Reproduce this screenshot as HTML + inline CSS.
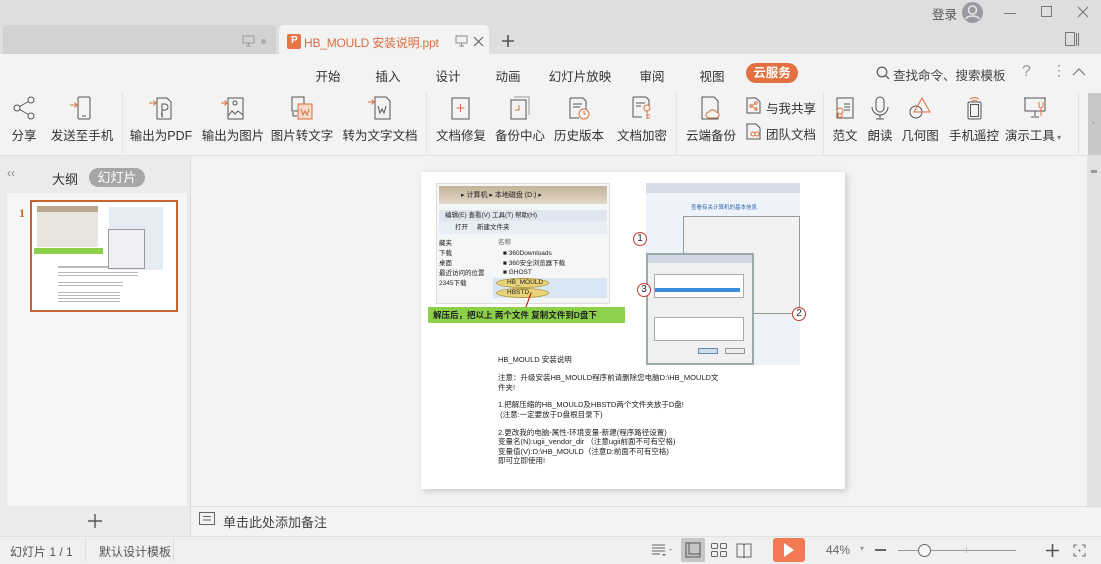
<!DOCTYPE html>
<html><head><meta charset="utf-8"><style>
*{margin:0;padding:0;box-sizing:border-box}
body{width:1101px;height:564px;overflow:hidden;position:relative;background:#f3f3f3;font-family:"Liberation Sans","Noto Sans CJK SC",sans-serif;color:#333}
.a{position:absolute}
.t{position:absolute;white-space:nowrap;font-size:12.5px;color:#333;transform:translateX(-50%)}
.m{position:absolute;font-size:12.5px;color:#333;white-space:nowrap;transform:translateX(-50%);top:66px}
.ic{position:absolute;top:96px;transform:translateX(-50%)}
.sep{position:absolute;top:92px;width:1px;height:62px;background:#e2e2e2}
svg{display:block}
.s{font-size:7.5px;color:#222;position:absolute;white-space:nowrap;line-height:10px}
</style></head><body>
<!-- title bar -->
<div class="a" style="left:0;top:0;width:1101px;height:54px;background:#dedede"></div>
<div class="a" style="left:3px;top:25px;width:273px;height:29px;background:#d2d2d2;border-radius:4px 4px 0 0"></div>
<svg class="a" style="left:242px;top:35px" width="13" height="12"><rect x="1" y="1" width="11" height="7" fill="none" stroke="#999"/><path d="M6.5 8v3M4 11h5" stroke="#999"/></svg>
<div class="a" style="left:261px;top:39px;width:5px;height:5px;border-radius:50%;background:#aaa"></div>
<div class="a" style="left:279px;top:25px;width:210px;height:30px;background:#f3f3f3;border-radius:5px 5px 0 0"></div>
<div class="a" style="left:287px;top:34px;width:14px;height:15px;background:#e8744a;border-radius:2px"></div>
<div class="a" style="left:291px;top:35px;color:#fff;font-size:10px;font-weight:bold">P</div>
<div class="a" style="left:304px;top:34px;font-size:12px;letter-spacing:-0.2px;color:#d96b3f;white-space:nowrap">HB_MOULD 安装说明.ppt</div>
<svg class="a" style="left:455px;top:35px" width="13" height="12"><rect x="1" y="1" width="11" height="7" fill="none" stroke="#888"/><path d="M6.5 8v3M4 11h5" stroke="#888"/></svg>
<svg class="a" style="left:473px;top:36px" width="11" height="11"><path d="M1 1L10 10M10 1L1 10" stroke="#666" stroke-width="1.2"/></svg>
<svg class="a" style="left:501px;top:34px" width="14" height="14"><path d="M7 1v12M1 7h12" stroke="#555" stroke-width="1.6"/></svg>
<div class="a" style="left:932px;top:4px;font-size:12.5px;color:#555">登录</div>
<svg class="a" style="left:962px;top:2px" width="21" height="21"><circle cx="10.5" cy="10.5" r="10.5" fill="#9a9aa3"/><circle cx="10.5" cy="8" r="4" fill="none" stroke="#e8e8e8" stroke-width="1.6"/><path d="M3.5 17c2-4 12-4 14 0" fill="none" stroke="#e8e8e8" stroke-width="1.6"/></svg>
<div class="a" style="left:1004px;top:13px;width:12px;height:1px;background:#777"></div>
<div class="a" style="left:1041px;top:6px;width:11px;height:11px;border:1px solid #777"></div>
<svg class="a" style="left:1077px;top:6px" width="12" height="12"><path d="M1 1L11 11M11 1L1 11" stroke="#777" stroke-width="1.1"/></svg>
<svg class="a" style="left:1065px;top:32px" width="15" height="14"><rect x=".5" y=".5" width="9" height="13" fill="none" stroke="#777"/><path d="M11.5 1v13M13.5 1v13" stroke="#777"/></svg>
<!-- menu -->
<div class="m" style="left:328px">开始</div><div class="m" style="left:388px">插入</div><div class="m" style="left:448px">设计</div><div class="m" style="left:508px">动画</div><div class="m" style="left:580px">幻灯片放映</div><div class="m" style="left:652px">审阅</div><div class="m" style="left:712px">视图</div>
<div class="a" style="left:746px;top:63px;width:52px;height:20px;border-radius:10px;background:#e3713f;color:#fff;font-size:12.5px;text-align:center;line-height:20px;font-weight:bold">云服务</div>
<svg class="a" style="left:876px;top:66px" width="14" height="14"><circle cx="6" cy="6" r="4.8" fill="none" stroke="#666" stroke-width="1.3"/><path d="M9.5 9.5L13 13" stroke="#666" stroke-width="1.4"/></svg>
<div class="a" style="left:893px;top:65px;font-size:12.5px;color:#444">查找命令、搜索模板</div>
<div class="a" style="left:1022px;top:63px;font-size:16px;color:#999">?</div>
<div class="a" style="left:1052px;top:62px;font-size:14px;color:#888">⋮</div>
<svg class="a" style="left:1072px;top:67px" width="14" height="9"><path d="M1 8L7 2L13 8" fill="none" stroke="#777" stroke-width="1.2"/></svg>
<!-- separators -->
<div class="sep" style="left:122px"></div><div class="sep" style="left:426px"></div><div class="sep" style="left:676px"></div><div class="sep" style="left:823px"></div><div class="sep" style="left:1078px"></div>
<div class="a" style="left:1088px;top:93px;width:13px;height:62px;background:#c8c8c8"></div>
<div class="a" style="left:1092px;top:118px;font-size:8px;color:#888">›</div>
<!-- icons -->
<svg class="ic" style="left:24px" width="24" height="24"><circle cx="19" cy="4" r="3" fill="none" stroke="#555"/><circle cx="5" cy="12" r="3" fill="none" stroke="#555"/><circle cx="19" cy="20" r="3" fill="none" stroke="#555"/><path d="M7.6 10.5L16.4 5.5M7.6 13.5L16.4 18.5" stroke="#555"/></svg>
<svg class="ic" style="left:82px" width="24" height="24"><rect x="8" y="1" width="12" height="22" rx="1.5" fill="none" stroke="#555"/><path d="M12 20h4" stroke="#555"/><path d="M0 9h7M4.5 6.5L7 9 4.5 11.5" fill="none" stroke="#d9703f"/></svg>
<svg class="ic" style="left:161px" width="24" height="24"><path d="M8 2h10l4 4v17H8z" fill="none" stroke="#555"/><path d="M13 21V8h3a3 3 0 010 6h-3M13 17c-2 2 2 3 0 4" fill="none" stroke="#555"/><path d="M0 7h7M4.5 4.5L7 7 4.5 9.5" fill="none" stroke="#d9703f"/></svg>
<svg class="ic" style="left:233px" width="24" height="24"><rect x="7" y="2" width="15" height="21" fill="none" stroke="#555"/><circle cx="14" cy="7" r="2" fill="none" stroke="#555"/><path d="M7 20l4-5 3 3 3-3 5 4" fill="none" stroke="#555"/><path d="M0 7h6M3.5 4.5L6 7 3.5 9.5" fill="none" stroke="#d9703f"/></svg>
<svg class="ic" style="left:302px" width="24" height="24"><rect x="2" y="1" width="12" height="14" fill="none" stroke="#555"/><path d="M8 8h14v15H8z" fill="#f4d8c8" stroke="#d9703f"/><path d="M11 13l2 6 2-4 2 4 2-6" fill="none" stroke="#d9703f"/><path d="M3 16v4h4" fill="none" stroke="#555"/></svg>
<svg class="ic" style="left:380px" width="24" height="24"><path d="M7 1h11l4 4v18H7z" fill="none" stroke="#555"/><path d="M10 10l2 7 2-4 2 4 2-7" fill="none" stroke="#555"/><path d="M0 6h6M3.5 3.5L6 6 3.5 8.5" fill="none" stroke="#d9703f"/></svg>
<svg class="ic" style="left:461px" width="24" height="24"><rect x="3" y="2" width="17" height="21" fill="none" stroke="#555"/><path d="M11.5 8v8M7.5 12h8" stroke="#d9703f"/></svg>
<svg class="ic" style="left:520px" width="24" height="24"><rect x="3" y="4" width="15" height="19" fill="none" stroke="#555"/><path d="M6 1h15v18" fill="none" stroke="#999"/><path d="M11 9v5H7" fill="none" stroke="#d9703f"/></svg>
<svg class="ic" style="left:579px" width="24" height="24"><path d="M3 2h13l3 3v9M3 2v20h9" fill="none" stroke="#555"/><path d="M6 8h9M6 11h7" stroke="#555"/><circle cx="17" cy="18" r="5" fill="none" stroke="#d9703f"/><path d="M17 15v3h2" fill="none" stroke="#d9703f"/></svg>
<svg class="ic" style="left:642px" width="24" height="24"><path d="M3 1h13l3 3v6M3 1v20h9" fill="none" stroke="#555"/><path d="M6 7h9M6 10h5" stroke="#555"/><circle cx="17" cy="12" r="3" fill="none" stroke="#d9703f"/><path d="M17 15v8M17 19h3M17 22h3" stroke="#d9703f"/></svg>
<svg class="ic" style="left:711px" width="24" height="24"><path d="M3 1h12l4 4v18H3z" fill="none" stroke="#555"/><path d="M10 22a3 3 0 010-6 4 4 0 017 0 3 3 0 010 6z" fill="#f3f3f3" stroke="#d9703f"/></svg>
<svg class="a" style="left:746px;top:97px" width="15" height="17"><path d="M1 1h9l4 4v11H1z" fill="none" stroke="#555"/><circle cx="10" cy="6" r="1.2" fill="none" stroke="#d9703f"/><circle cx="5" cy="9" r="1.2" fill="none" stroke="#d9703f"/><circle cx="10" cy="12" r="1.2" fill="none" stroke="#d9703f"/><path d="M6 8.5l3-2M6 9.5l3 2" stroke="#d9703f"/></svg>
<div class="a" style="left:766px;top:98px;font-size:12.5px">与我共享</div>
<svg class="a" style="left:746px;top:123px" width="15" height="17"><path d="M1 1h9l4 4v11H1z" fill="none" stroke="#555"/><circle cx="7" cy="11" r="2" fill="none" stroke="#d9703f"/><circle cx="11" cy="11" r="2" fill="none" stroke="#d9703f"/></svg>
<div class="a" style="left:766px;top:124px;font-size:12.5px">团队文档</div>
<svg class="ic" style="left:845px" width="24" height="24"><rect x="4" y="2" width="16" height="20" fill="none" stroke="#555"/><path d="M11 8h6M11 11h6M11 14h6" stroke="#555"/><circle cx="7" cy="15" r="3" fill="#f3f3f3" stroke="#d9703f"/><path d="M5 18v4l2-1 2 1v-4" fill="none" stroke="#d9703f"/></svg>
<svg class="ic" style="left:880px" width="24" height="24"><rect x="8" y="1" width="8" height="15" rx="4" fill="none" stroke="#555"/><path d="M4 11a8 8 0 0016 0M12 19v4M8 23h8" fill="none" stroke="#555"/></svg>
<svg class="ic" style="left:920px" width="24" height="24"><circle cx="8" cy="16" r="6" fill="none" stroke="#555"/><path d="M14 2L22 16H6z" fill="none" stroke="#d9703f"/></svg>
<svg class="ic" style="left:974px" width="24" height="24"><rect x="6" y="6" width="13" height="17" rx="1.5" fill="none" stroke="#555"/><rect x="8.5" y="8.5" width="8" height="12" fill="none" stroke="#555"/><path d="M8 3a6 4 0 019 0M10 5a3 2 0 015 0" fill="none" stroke="#d9703f"/></svg>
<svg class="ic" style="left:1035px" width="24" height="24"><path d="M1 2h22M2 2v13h20V2" fill="none" stroke="#555"/><path d="M12 15v5M8 21h8" stroke="#555"/><path d="M16 6v4a2 2 0 004 0V6M18 12v8" fill="none" stroke="#d9703f"/></svg>
<div class="t" style="left:24px;top:125px">分享</div>
<div class="t" style="left:82px;top:125px">发送至手机</div>
<div class="t" style="left:161px;top:125px">输出为PDF</div>
<div class="t" style="left:233px;top:125px">输出为图片</div>
<div class="t" style="left:302px;top:125px">图片转文字</div>
<div class="t" style="left:380px;top:125px">转为文字文档</div>
<div class="t" style="left:461px;top:125px">文档修复</div>
<div class="t" style="left:520px;top:125px">备份中心</div>
<div class="t" style="left:579px;top:125px">历史版本</div>
<div class="t" style="left:642px;top:125px">文档加密</div>
<div class="t" style="left:711px;top:125px">云端备份</div>
<div class="t" style="left:845px;top:125px">范文</div>
<div class="t" style="left:880px;top:125px">朗读</div>
<div class="t" style="left:920px;top:125px">几何图</div>
<div class="t" style="left:974px;top:125px">手机遥控</div>
<div class="t" style="left:1033px;top:125px">演示工具<span style="font-size:8px;color:#777"> ▾</span></div>
<div class="a" style="left:0;top:155px;width:1101px;height:1px;background:#e0e0e0"></div>
<!-- left panel -->
<div class="a" style="left:0;top:156px;width:190px;height:380px;background:#ebebeb"></div>
<div class="a" style="left:190px;top:156px;width:1px;height:380px;background:#dcdcdc"></div>
<div class="a" style="left:7px;top:166px;font-size:12px;color:#888">‹‹</div>
<div class="a" style="left:52px;top:169px;font-size:13px;color:#333">大纲</div>
<div class="a" style="left:89px;top:168px;width:56px;height:19px;border-radius:10px;background:#a6a6a6;color:#fff;font-size:13px;text-align:center;line-height:19px">幻灯片</div>
<div class="a" style="left:7px;top:193px;width:180px;height:313px;background:#f6f6f6"></div>
<div class="a" style="left:19px;top:206px;font-size:12px;font-weight:bold;color:#c8652f;font-family:'Liberation Serif',serif">1</div>
<div class="a" style="left:30px;top:200px;width:148px;height:112px;border:2px solid #c8652f;background:#fff;overflow:hidden">
 <div class="a" style="left:5px;top:4px;width:61px;height:41px;background:#e8e4de"></div>
 <div class="a" style="left:5px;top:4px;width:61px;height:6px;background:#b8a88e"></div>
 <div class="a" style="left:2px;top:46px;width:69px;height:6px;background:#8dd04a"></div>
 <div class="a" style="left:77px;top:5px;width:54px;height:63px;background:#e6ecf3"></div>
 <div class="a" style="left:76px;top:27px;width:37px;height:40px;background:#eef0f3;border:1px solid #999"></div>
 <div class="a" style="left:26px;top:64px;width:50px;height:2px;background:#bbb"></div>
 <div class="a" style="left:26px;top:70px;width:80px;height:6px;background:repeating-linear-gradient(#bbb 0 1px,transparent 1px 3px)"></div>
 <div class="a" style="left:26px;top:80px;width:65px;height:6px;background:repeating-linear-gradient(#bbb 0 1px,transparent 1px 3px)"></div>
 <div class="a" style="left:26px;top:90px;width:62px;height:12px;background:repeating-linear-gradient(#bbb 0 1px,transparent 1px 3px)"></div>
</div>
<svg class="a" style="left:87px;top:513px" width="16" height="16"><path d="M8 1v14M1 8h14" stroke="#555" stroke-width="1.4"/></svg>
<!-- main -->
<div class="a" style="left:1087px;top:156px;width:14px;height:350px;background:#e2e2e2"></div>
<div class="a" style="left:1091px;top:170px;width:6px;height:3px;background:#999"></div>
<div class="a" style="left:191px;top:506px;width:910px;height:1px;background:#dedede"></div>
<svg class="a" style="left:199px;top:512px" width="16" height="14"><rect x=".5" y=".5" width="15" height="12" fill="none" stroke="#666"/><path d="M4 4.5h8M4 8h8" stroke="#666"/></svg>
<div class="a" style="left:223px;top:512px;font-size:13px;color:#444">单击此处添加备注</div>
<!-- slide -->
<div class="a" style="left:421px;top:172px;width:424px;height:317px;background:#fff;box-shadow:2px 2px 6px rgba(0,0,0,.18)">
 <div class="a" style="left:15px;top:11px;width:174px;height:121px;background:#f4f6f8;border:1px solid #ddd"></div>
 <div class="a" style="left:18px;top:14px;width:168px;height:18px;background:linear-gradient(#c3b39a,#e2d8c8)"></div>
 <div class="s" style="left:40px;top:19px;font-size:7px">▸ 计算机 ▸ 本地磁盘 (D:) ▸</div>
 <div class="a" style="left:18px;top:38px;width:168px;height:11px;background:#dfe6ef"></div>
 <div class="s" style="left:24px;top:39px;font-size:6.5px">编辑(E) 查看(V) 工具(T) 帮助(H)</div>
 <div class="a" style="left:18px;top:49px;width:168px;height:13px;background:#e8eef6"></div>
 <div class="s" style="left:34px;top:51px;font-size:6.5px">打开&nbsp;&nbsp;&nbsp;&nbsp; 新建文件夹</div>
 <div class="s" style="left:18px;top:67px;font-size:6.5px;line-height:10px">藏夹<br>下载<br>桌面<br>最近访问的位置<br>2345下载</div>
 <div class="s" style="left:77px;top:66px;font-size:6.5px;color:#666">名称</div>
 <div class="s" style="left:82px;top:77px;font-size:6.5px;line-height:9.5px">■ 360Downloads<br>■ 360安全浏览器下载<br>■ GHOST</div>
 <div class="a" style="left:72px;top:106px;width:114px;height:10px;background:#d8e6f4"></div>
 <div class="a" style="left:72px;top:116px;width:114px;height:10px;background:#d8e6f4"></div>
 <div class="a" style="left:75px;top:106px;width:53px;height:10px;border-radius:50%;background:#e8d27a;border:1px solid #b69b3c"></div>
 <div class="a" style="left:75px;top:116px;width:53px;height:10px;border-radius:50%;background:#e8d27a;border:1px solid #b69b3c"></div>
 <div class="s" style="left:86px;top:106px;font-size:6.5px">HB_MOULD</div>
 <div class="s" style="left:86px;top:116px;font-size:6.5px">HBSTD</div>
 <div class="a" style="left:107px;top:120px;width:1px;height:16px;background:#c00;transform:rotate(20deg)"></div>
 <div class="a" style="left:7px;top:135px;width:197px;height:16px;background:#8dd04a"></div>
 <div class="s" style="left:12px;top:138px;font-size:8.5px;font-weight:bold">解压后，把以上 两个文件 复制文件到D盘下</div>
 <div class="a" style="left:225px;top:11px;width:154px;height:182px;background:#eef3f9"></div>
 <div class="a" style="left:225px;top:11px;width:154px;height:10px;background:#d6dde8"></div>
 <div class="s" style="left:270px;top:31px;font-size:5.5px;color:#3366aa">查看有关计算机的基本信息</div>
 <div class="a" style="left:262px;top:44px;width:117px;height:98px;background:#f2f2f2;border:1px solid #999"></div>
 <div class="a" style="left:225px;top:81px;width:108px;height:112px;background:#f0f0f0;border:2px solid #9aa"></div>
 <div class="a" style="left:227px;top:83px;width:104px;height:8px;background:#cfd8e4"></div>
 <div class="a" style="left:233px;top:102px;width:90px;height:24px;background:#fff;border:1px solid #aaa"></div>
 <div class="a" style="left:234px;top:116px;width:85px;height:4px;background:#3b8de0"></div>
 <div class="a" style="left:233px;top:145px;width:90px;height:24px;background:#fff;border:1px solid #aaa"></div>
 <div class="a" style="left:277px;top:176px;width:20px;height:6px;background:#cde;border:1px solid #68a"></div>
 <div class="a" style="left:304px;top:176px;width:20px;height:6px;background:#eee;border:1px solid #999"></div>
 <div class="a" style="left:212px;top:60px;width:14px;height:14px;border-radius:50%;border:1.5px solid #c0392b;background:#fff;font-size:10px;text-align:center;line-height:11px;color:#223">1</div>
 <div class="a" style="left:216px;top:111px;width:14px;height:14px;border-radius:50%;border:1.5px solid #c0392b;background:#fff;font-size:10px;text-align:center;line-height:11px;color:#223">3</div>
 <div class="a" style="left:371px;top:135px;width:14px;height:14px;border-radius:50%;border:1.5px solid #c0392b;background:#fff;font-size:10px;text-align:center;line-height:11px;color:#223">2</div>
 <div class="s" style="left:77px;top:182px;line-height:11px">HB_MOULD 安装说明</div>
 <div class="s" style="left:77px;top:201px;line-height:9.5px">注意：升级安装HB_MOULD程序前请删除您电脑D:\HB_MOULD文<br>件夹!</div>
 <div class="s" style="left:77px;top:228px;line-height:9.5px">1.把解压缩的HB_MOULD及HBSTD两个文件夹放于D盘!<br>&nbsp;(注意:一定要放于D盘根目录下)</div>
 <div class="s" style="left:77px;top:256px;line-height:9.3px">2.更改我的电脑-属性-环境变量-新建(程序路径设置)<br>变量名(N):ugii_vendor_dir （注意ugii前面不可有空格)<br>变量值(V):D:\HB_MOULD（注意D:前面不可有空格)<br>即可立即使用!</div>
</div>
<!-- status bar -->
<div class="a" style="left:0;top:536px;width:1101px;height:28px;background:#f0f0f0;border-top:1px solid #e0e0e0"></div>
<div class="a" style="left:10px;top:543px;font-size:12px;color:#555">幻灯片 1 / 1</div>
<div class="a" style="left:85px;top:538px;width:1px;height:24px;background:#ddd"></div>
<div class="a" style="left:99px;top:543px;font-size:12px;color:#555">默认设计模板</div>
<div class="a" style="left:173px;top:538px;width:1px;height:24px;background:#ddd"></div>
<svg class="a" style="left:651px;top:543px" width="22" height="14"><path d="M1 2h13M1 5h13M1 8h13M1 11h8" stroke="#666"/><path d="M11 11l2 2 2-2" fill="#666"/><path d="M18 6l1.5 1.5L21 6z" fill="#888"/></svg>
<div class="a" style="left:681px;top:538px;width:24px;height:24px;background:#c6c6c6;border-radius:2px"></div>
<svg class="a" style="left:685px;top:542px" width="16" height="16"><rect x="1" y="1" width="14" height="14" fill="none" stroke="#555"/><path d="M4 1v11h11" fill="none" stroke="#555"/></svg>
<svg class="a" style="left:711px;top:543px" width="16" height="14"><rect x=".5" y=".5" width="6" height="5" rx="1" fill="none" stroke="#666"/><rect x="9.5" y=".5" width="6" height="5" rx="1" fill="none" stroke="#666"/><rect x=".5" y="8.5" width="6" height="5" rx="1" fill="none" stroke="#666"/><rect x="9.5" y="8.5" width="6" height="5" rx="1" fill="none" stroke="#666"/></svg>
<svg class="a" style="left:736px;top:543px" width="16" height="15"><path d="M1 1h6l1 1 1-1h6v13H9l-1 1-1-1H1zM8 2v12" fill="none" stroke="#666"/></svg>
<div class="a" style="left:773px;top:538px;width:32px;height:24px;background:#f27b55;border-radius:3px"></div>
<svg class="a" style="left:783px;top:542px" width="12" height="16"><path d="M1 1l10 7-10 7z" fill="#fff"/></svg>
<div class="a" style="left:826px;top:543px;font-size:12px;color:#666">44%</div>
<div class="a" style="left:860px;top:544px;font-size:8px;color:#999">▾</div>
<div class="a" style="left:875px;top:549px;width:11px;height:2px;background:#666"></div>
<div class="a" style="left:898px;top:550px;width:118px;height:1px;background:#999"></div>
<div class="a" style="left:966px;top:547px;width:1px;height:6px;background:#bbb"></div>
<div class="a" style="left:918px;top:544px;width:13px;height:13px;border-radius:50%;border:1px solid #666;background:#f6f6f6"></div>
<svg class="a" style="left:1046px;top:544px" width="13" height="13"><path d="M6.5 0v13M0 6.5h13" stroke="#555" stroke-width="1.6"/></svg>
<svg class="a" style="left:1073px;top:544px" width="13" height="13"><path d="M1 4V1h3M9 1h3v3M12 9v3H9M4 12H1V9" fill="none" stroke="#666"/><circle cx="6.5" cy="6.5" r="1" fill="#666"/></svg>
</body></html>
